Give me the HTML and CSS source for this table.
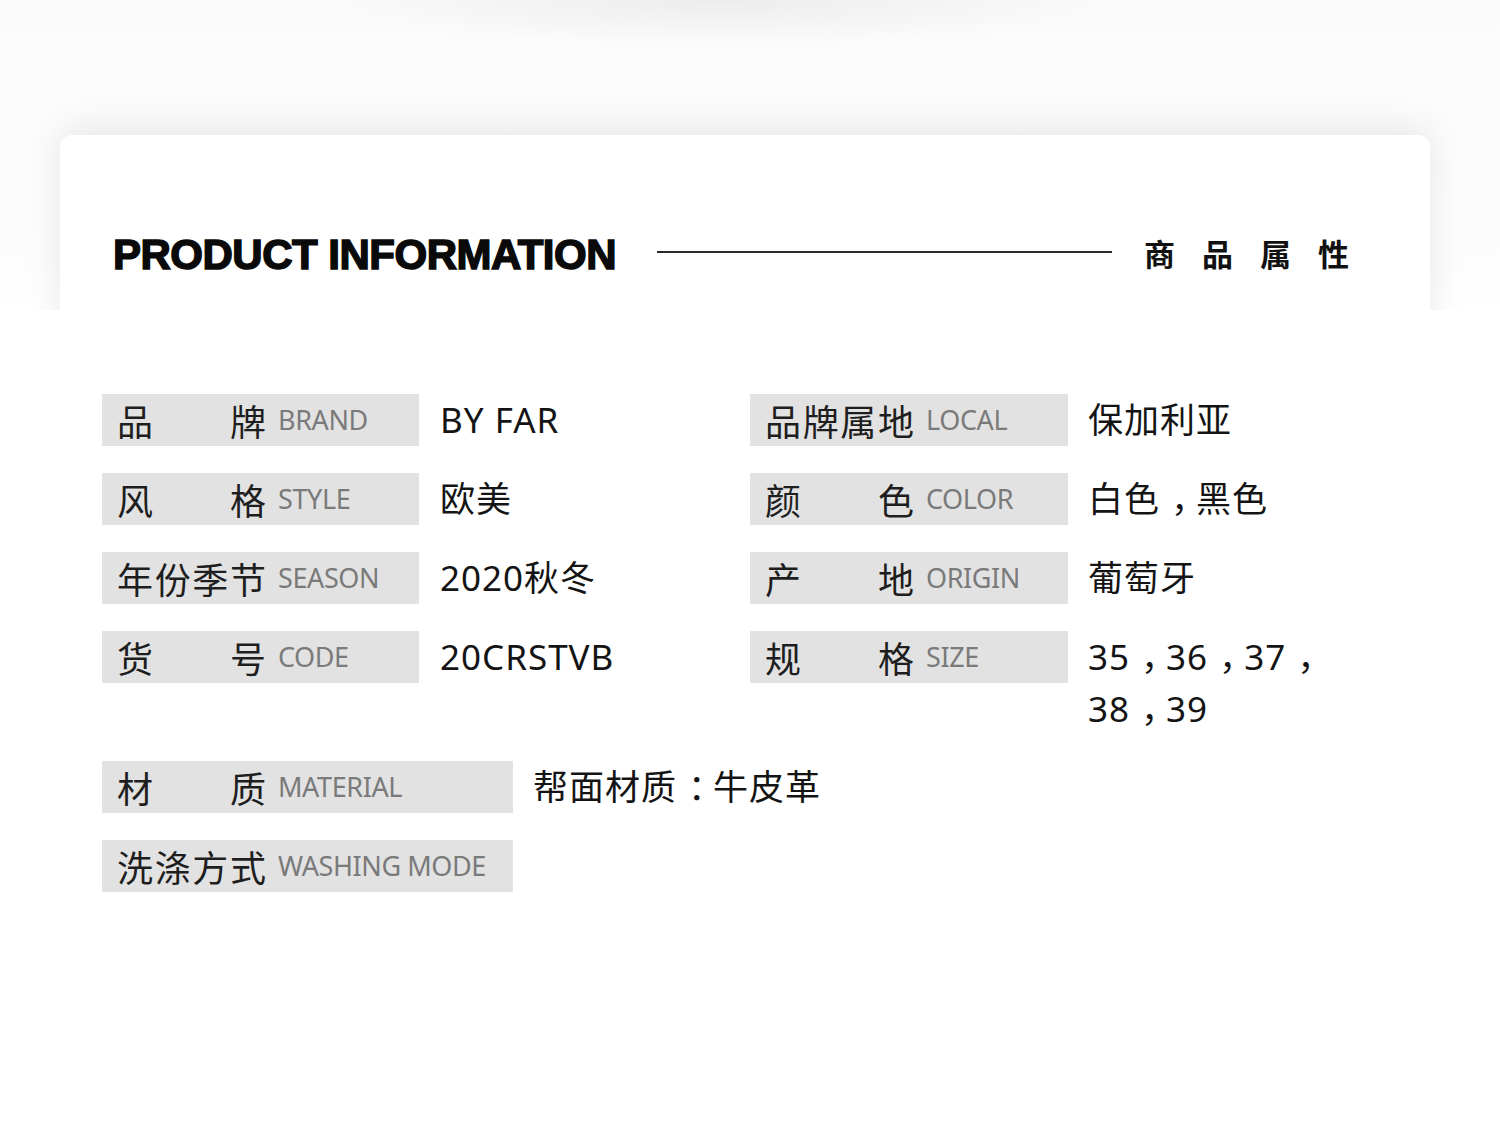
FILE: index.html
```html
<!DOCTYPE html>
<html lang="zh-CN">
<head>
<meta charset="utf-8">
<title>商品属性</title>
<link rel="stylesheet" href="styles.css">
</head>
<body>
<div class="page">
  <section class="hero">
    <div class="card">
      <div class="head">
        <h1 class="title">PRODUCT INFORMATION</h1>
        <span class="rule"></span>
        <span class="cn-title">商品属性</span>
      </div>
    </div>
  </section>

  <section class="specs">
    <div class="pairs">
      <div class="item">
        <div class="label"><span class="zh"><span>品</span><span>牌</span></span><span class="en">BRAND</span></div>
        <div class="value">BY FAR</div>
      </div>
      <div class="item right">
        <div class="label"><span class="zh"><span>品</span><span>牌</span><span>属</span><span>地</span></span><span class="en">LOCAL</span></div>
        <div class="value">保加利亚</div>
      </div>

      <div class="item">
        <div class="label"><span class="zh"><span>风</span><span>格</span></span><span class="en">STYLE</span></div>
        <div class="value">欧美</div>
      </div>
      <div class="item right">
        <div class="label"><span class="zh"><span>颜</span><span>色</span></span><span class="en">COLOR</span></div>
        <div class="value">白色<span class="p">，</span>黑色</div>
      </div>

      <div class="item">
        <div class="label"><span class="zh"><span>年</span><span>份</span><span>季</span><span>节</span></span><span class="en">SEASON</span></div>
        <div class="value">2020秋冬</div>
      </div>
      <div class="item right">
        <div class="label"><span class="zh"><span>产</span><span>地</span></span><span class="en">ORIGIN</span></div>
        <div class="value">葡萄牙</div>
      </div>

      <div class="item">
        <div class="label"><span class="zh"><span>货</span><span>号</span></span><span class="en">CODE</span></div>
        <div class="value">20CRSTVB</div>
      </div>
      <div class="item right">
        <div class="label"><span class="zh"><span>规</span><span>格</span></span><span class="en">SIZE</span></div>
        <div class="value size">35<span class="p">，</span>36<span class="p">，</span>37<span class="p">，</span>38<span class="p">，</span>39</div>
      </div>
    </div>

    <div class="wide">
      <div class="item">
        <div class="label long"><span class="zh"><span>材</span><span>质</span></span><span class="en">MATERIAL</span></div>
        <div class="value">帮面材质<span class="p">：</span>牛皮革</div>
      </div>
      <div class="item">
        <div class="label long"><span class="zh"><span>洗</span><span>涤</span><span>方</span><span>式</span></span><span class="en">WASHING MODE</span></div>
      </div>
    </div>
  </section>
</div>
</body>
</html>
```

FILE: styles.css
```css
html, body {
  margin: 0;
  padding: 0;
  background: #ffffff;
}

.page {
  width: 1500px;
  min-height: 1132px;
  background: #ffffff;
  font-family: "Noto Sans", "Noto Sans CJK SC", sans-serif;
  color: #151515;
}

/* ---------- header ---------- */
.hero {
  height: 310px;
  overflow: hidden;
  box-sizing: border-box;
  padding: 135px 70px 0 60px;
  background:
    radial-gradient(ellipse 420px 45px at 48% 0, rgba(0,0,0,0.06), rgba(0,0,0,0) 100%),
    linear-gradient(#fbfbfb, #fcfcfc 50%, #fdfdfd 85%, #ffffff);
}

.card {
  height: 400px;
  background: #ffffff;
  border-radius: 12px;
  box-shadow: 0 -6px 36px rgba(0, 0, 0, 0.09);
}

.head {
  display: flex;
  align-items: center;
  height: 60px;
  padding-top: 90px;
  padding-left: 53px;
}

.title {
  margin: 0;
  font-family: "Liberation Sans", Arial, sans-serif;
  font-weight: 700;
  font-size: 42px;
  line-height: 60px;
  letter-spacing: -0.5px;
  color: #0a0a0a;
  -webkit-text-stroke: 1.5px #0a0a0a;
  white-space: nowrap;
}

.rule {
  width: 455px;
  height: 2px;
  margin-left: 41px;
  margin-top: -6px;
  background: #2a2a2a;
}

.cn-title {
  margin-left: 32px;
  margin-top: -4px;
  font-family: "Noto Sans CJK SC", sans-serif;
  font-weight: 700;
  font-size: 31px;
  letter-spacing: 27px;
  color: #111;
  line-height: 60px;
  white-space: nowrap;
}

/* ---------- specs ---------- */
.specs {
  padding: 84px 0 0 102px;
}

.pairs {
  display: grid;
  grid-template-columns: 648px 650px;
  row-gap: 27px;
  align-items: start;
}

.item {
  display: flex;
  align-items: flex-start;
}

.label {
  flex: none;
  width: 317px;
  height: 52px;
  box-sizing: border-box;
  padding-left: 15px;
  display: flex;
  align-items: center;
  background: #e2e2e2;
}

.right .label {
  width: 318px;
}

.label.long {
  width: 411px;
}

.zh {
  width: 149px;
  display: flex;
  justify-content: space-between;
  font-family: "Noto Sans CJK SC", sans-serif;
  font-size: 36px;
  line-height: 52px;
  color: #1e1e1e;
}

.en {
  margin-left: 12px;
  font-family: "Noto Sans", "Open Sans", sans-serif;
  font-size: 27px;
  line-height: 52px;
  color: #7a7a7a;
  letter-spacing: -0.4px;
  white-space: nowrap;
}

.value {
  flex: none;
  margin-left: 21px;
  font-family: "Noto Sans", "Noto Sans CJK SC", sans-serif;
  font-size: 35px;
  line-height: 52px;
  letter-spacing: 1px;
  color: #141414;
  white-space: nowrap;
}

.value .p {
  padding-left: 11px;
  letter-spacing: -10px;
}

.right .value {
  margin-left: 20px;
}

.value.size {
  width: 250px;
  white-space: normal;
}

.wide {
  display: flex;
  flex-direction: column;
  gap: 27px;
  margin-top: 26px;
}

.wide .value {
  margin-left: 20px;
}
```
